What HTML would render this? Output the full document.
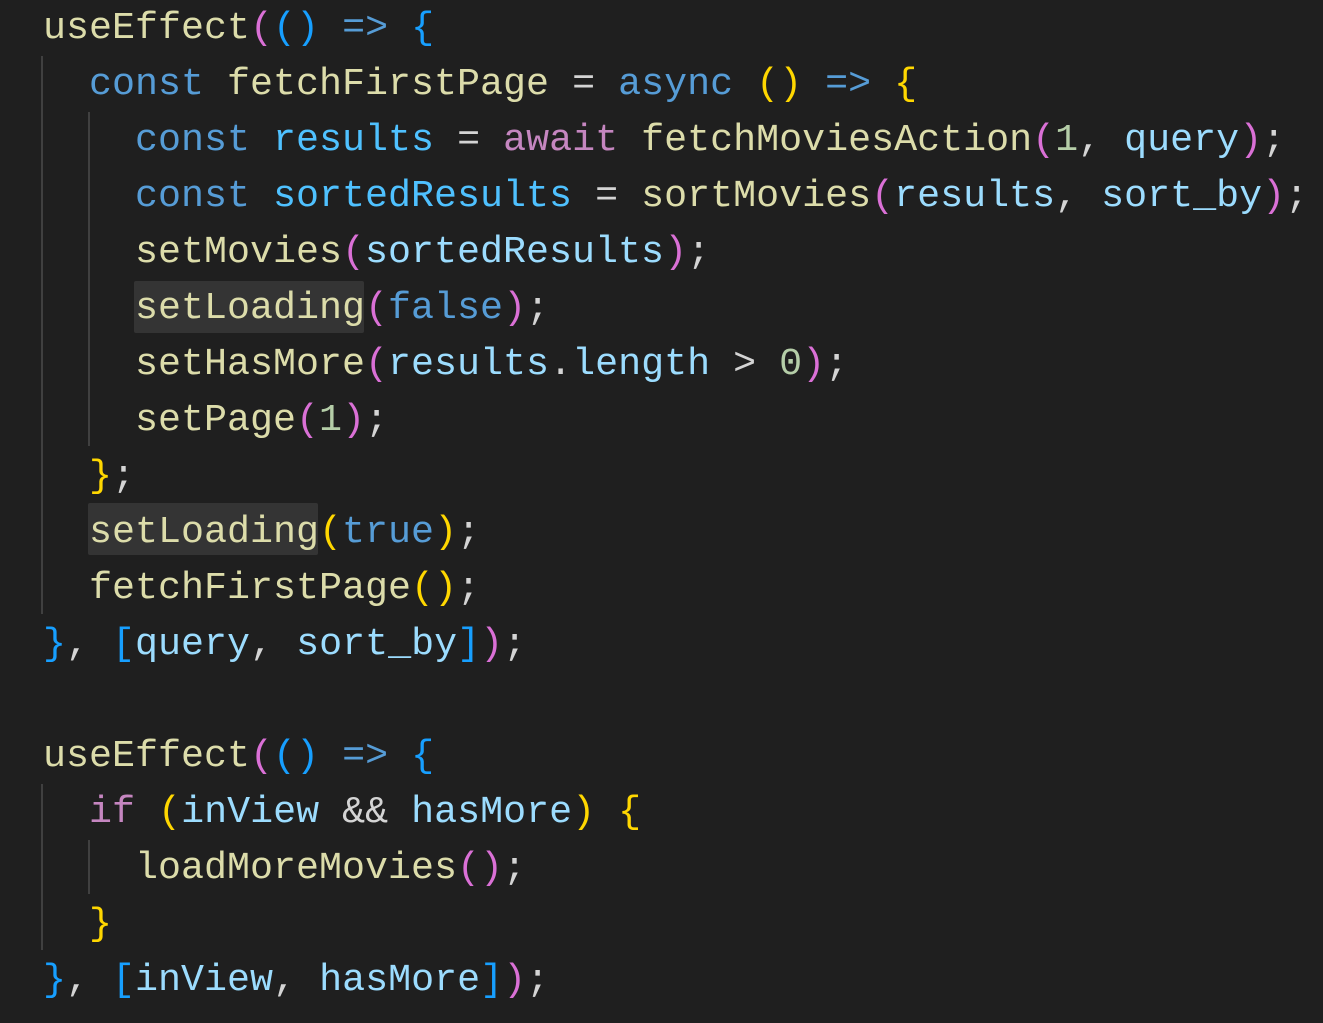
<!DOCTYPE html>
<html><head><meta charset="utf-8"><style>
html,body{margin:0;padding:0;background:#1f1f1f;width:1323px;height:1023px;overflow:hidden}
.code{position:absolute;left:43px;top:0;font-family:"Liberation Mono",monospace;font-size:38.33px;line-height:56px;color:#d4d4d4;white-space:pre}
.f{color:#dcdcaa}.k{color:#569cd6}.v{color:#9cdcfe}.c{color:#4fc1ff}.p{color:#c586c0}.n{color:#b5cea8}
.y{color:#ffd700}.m{color:#da70d6}.b{color:#179fff}
.g{position:absolute;width:2px;background:#404040}
.hl{position:absolute;background:#343434;border-radius:2px}
</style></head><body>
<div class="g" style="left:41px;top:56px;height:558px"></div>
<div class="g" style="left:88px;top:112px;height:334px"></div>
<div class="g" style="left:41px;top:784px;height:166px"></div>
<div class="g" style="left:88px;top:840px;height:54px"></div>
<div class="hl" style="left:134px;top:281px;width:230px;height:52px"></div>
<div class="hl" style="left:88px;top:503px;width:230px;height:52px"></div>
<div class="code"><span class="f">useEffect</span><span class="m">(</span><span class="b">()</span> <span class="k">=&gt;</span> <span class="b">{</span>
  <span class="k">const</span> <span class="f">fetchFirstPage</span> = <span class="k">async</span> <span class="y">()</span> <span class="k">=&gt;</span> <span class="y">{</span>
    <span class="k">const</span> <span class="c">results</span> = <span class="p">await</span> <span class="f">fetchMoviesAction</span><span class="m">(</span><span class="n">1</span>, <span class="v">query</span><span class="m">)</span>;
    <span class="k">const</span> <span class="c">sortedResults</span> = <span class="f">sortMovies</span><span class="m">(</span><span class="v">results</span>, <span class="v">sort_by</span><span class="m">)</span>;
    <span class="f">setMovies</span><span class="m">(</span><span class="v">sortedResults</span><span class="m">)</span>;
    <span class="f">setLoading</span><span class="m">(</span><span class="k">false</span><span class="m">)</span>;
    <span class="f">setHasMore</span><span class="m">(</span><span class="v">results</span>.<span class="v">length</span> &gt; <span class="n">0</span><span class="m">)</span>;
    <span class="f">setPage</span><span class="m">(</span><span class="n">1</span><span class="m">)</span>;
  <span class="y">}</span>;
  <span class="f">setLoading</span><span class="y">(</span><span class="k">true</span><span class="y">)</span>;
  <span class="f">fetchFirstPage</span><span class="y">()</span>;
<span class="b">}</span>, <span class="b">[</span><span class="v">query</span>, <span class="v">sort_by</span><span class="b">]</span><span class="m">)</span>;

<span class="f">useEffect</span><span class="m">(</span><span class="b">()</span> <span class="k">=&gt;</span> <span class="b">{</span>
  <span class="p">if</span> <span class="y">(</span><span class="v">inView</span> &amp;&amp; <span class="v">hasMore</span><span class="y">)</span> <span class="y">{</span>
    <span class="f">loadMoreMovies</span><span class="m">()</span>;
  <span class="y">}</span>
<span class="b">}</span>, <span class="b">[</span><span class="v">inView</span>, <span class="v">hasMore</span><span class="b">]</span><span class="m">)</span>;</div>
</body></html>
